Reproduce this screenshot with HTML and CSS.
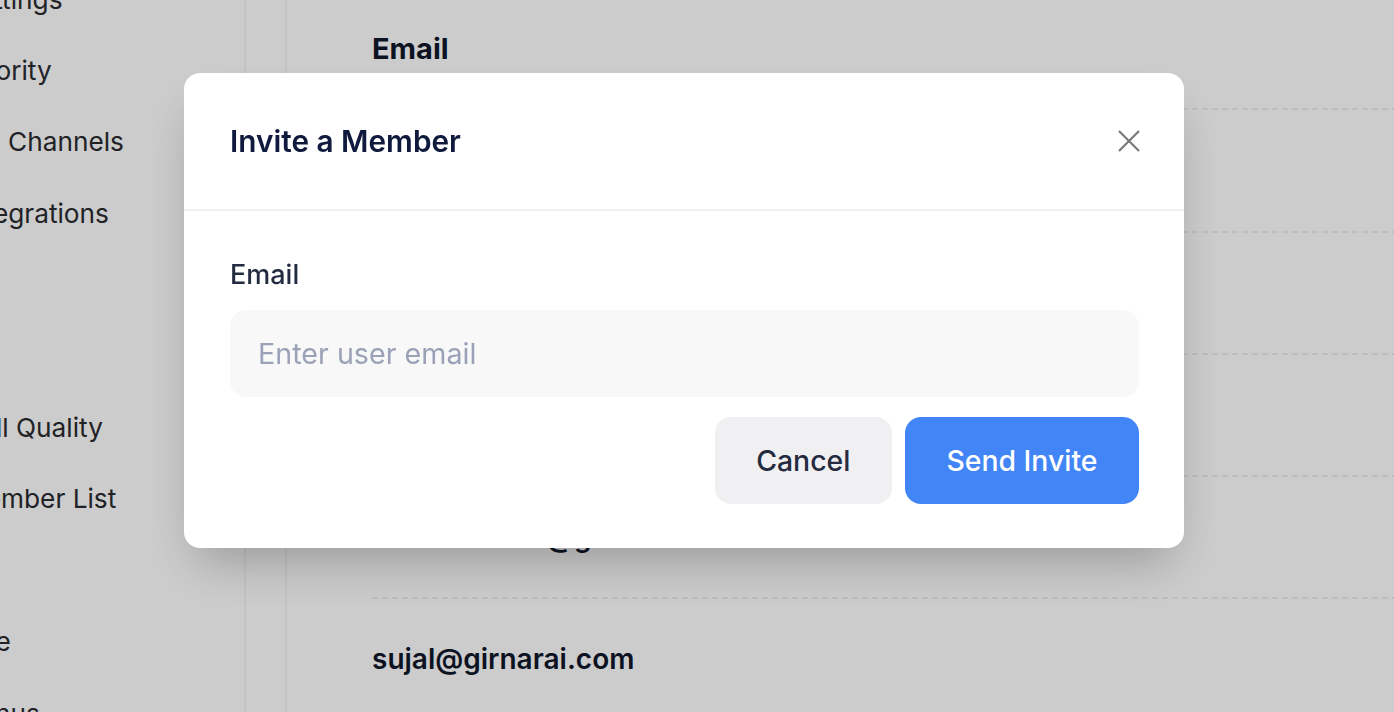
FILE: index.html
```html
<!DOCTYPE html>
<html lang="en">
<head>
<meta charset="utf-8">
<title>Invite a Member</title>
<link rel="stylesheet" href="styles.css">
</head>
<body>
<div class="app">
  <aside class="sidebar">
    <ul class="nav">
      <li class="nav-item">Settings</li>
      <li class="nav-item">Priority</li>
      <li class="nav-item">My Channels</li>
      <li class="nav-item">Integrations</li>
      <li class="nav-item"></li>
      <li class="nav-item"></li>
      <li class="nav-item">Call Quality</li>
      <li class="nav-item">Member List</li>
      <li class="nav-item"></li>
      <li class="nav-item">Use</li>
      <li class="nav-item">Bonus</li>
    </ul>
  </aside>
  <div class="rail"></div>
  <main class="main">
    <div class="table">
      <div class="row head">Email</div>
      <div class="row">rahul@girnarai.com</div>
      <div class="row">priya@girnarai.com</div>
      <div class="row">rohan@girnarai.com</div>
      <div class="row">mohit.rathod@gmail.com</div>
      <div class="row">sujal@girnarai.com</div>
    </div>
  </main>
</div>

<div class="overlay">
  <div class="modal">
    <div class="modal-header">
      <h2 class="modal-title">Invite a Member</h2>
      <button class="close" aria-label="Close">
        <svg width="22" height="22" viewBox="0 0 22 22"><path d="M1 1L21 21M21 1L1 21" stroke="#7a7a7a" stroke-width="2.2" fill="none"/></svg>
      </button>
    </div>
    <div class="modal-body">
      <label class="label" for="email">Email</label>
      <input id="email" class="input" type="email" placeholder="Enter user email">
      <div class="actions">
        <button class="btn btn-cancel">Cancel</button>
        <button class="btn btn-primary">Send Invite</button>
      </div>
    </div>
  </div>
</div>
</body>
</html>
```

FILE: styles.css
```css
* { box-sizing: border-box; }
html, body {
  margin: 0;
  padding: 0;
  width: 1394px;
  height: 712px;
  overflow: hidden;
  font-family: Inter, "Noto Sans", sans-serif;
  background: #ffffff;
}
.app {
  display: flex;
  height: 712px;
  overflow: hidden;
}
.sidebar {
  width: 246px;
  flex: none;
  border-right: 2px solid #f4f4f4;
  overflow: hidden;
}
.nav {
  list-style: none;
  margin: -36px 0 0 -38px;
  padding: 0;
}
.nav-item {
  height: 71.4px;
  display: flex;
  align-items: center;
  font-size: 26.25px;
  line-height: 40px;
  color: #2a2b30;
  white-space: nowrap;
}
.rail {
  width: 41px;
  flex: none;
  border-right: 2px solid #f4f4f4;
}
.main {
  flex: 1;
  padding-left: 85px;
  overflow: hidden;
}
.table {
  margin-top: -12px;
  display: flex;
  flex-direction: column;
}
.row {
  height: 122.25px;
  flex: none;
  display: flex;
  align-items: center;
  padding-bottom: 2px;
  font-size: 28px;
  font-weight: 600;
  color: #0f172a;
  background-image: repeating-linear-gradient(to right, #eeeeee 0 6px, transparent 6px 10px);
  background-size: 100% 2px;
  background-position: left bottom;
  background-repeat: no-repeat;
}
.row.head { font-weight: 700; font-size: 29px; }

.overlay {
  position: fixed;
  inset: 0;
  background: rgba(0, 0, 0, 0.2);
  padding: 73px 0 0 184px;
}
.modal {
  width: 1000px;
  background: #ffffff;
  border-radius: 16px;
  box-shadow: 0 25px 50px -12px rgba(0, 0, 0, 0.25);
}
.modal-header {
  display: flex;
  align-items: center;
  justify-content: space-between;
  padding: 46px 44px 46px 46px;
  border-bottom: 2px solid #f0f0f0;
}
.modal-title {
  margin: 0;
  font-size: 29.75px;
  line-height: 44px;
  font-weight: 600;
  color: #0f1a3d;
}
.close {
  border: none;
  background: none;
  padding: 0;
  width: 22px;
  height: 22px;
  display: flex;
}
.modal-body {
  display: flex;
  flex-direction: column;
  padding: 44px 45px 44px 46px;
}
.label {
  font-size: 27px;
  line-height: 40px;
  font-weight: 500;
  color: #232b40;
  margin-bottom: 15px;
}
.input {
  height: 87px;
  border: none;
  outline: none;
  border-radius: 16px;
  background: #f8f8f9;
  padding: 0 28px;
  font-family: inherit;
  font-size: 28.7px;
  color: #232b40;
}
.input::placeholder { color: #9ba1b7; }
.actions {
  display: flex;
  justify-content: flex-end;
  gap: 13px;
  margin-top: 20px;
}
.btn {
  height: 87px;
  border: none;
  border-radius: 16px;
  padding: 0 41.5px;
  font-family: inherit;
  font-size: 28.4px;
  font-weight: 500;
}
.btn-cancel {
  background: #f0f0f2;
  color: #252b3f;
}
.btn-primary {
  background: #4285f6;
  color: #ffffff;
}
```
